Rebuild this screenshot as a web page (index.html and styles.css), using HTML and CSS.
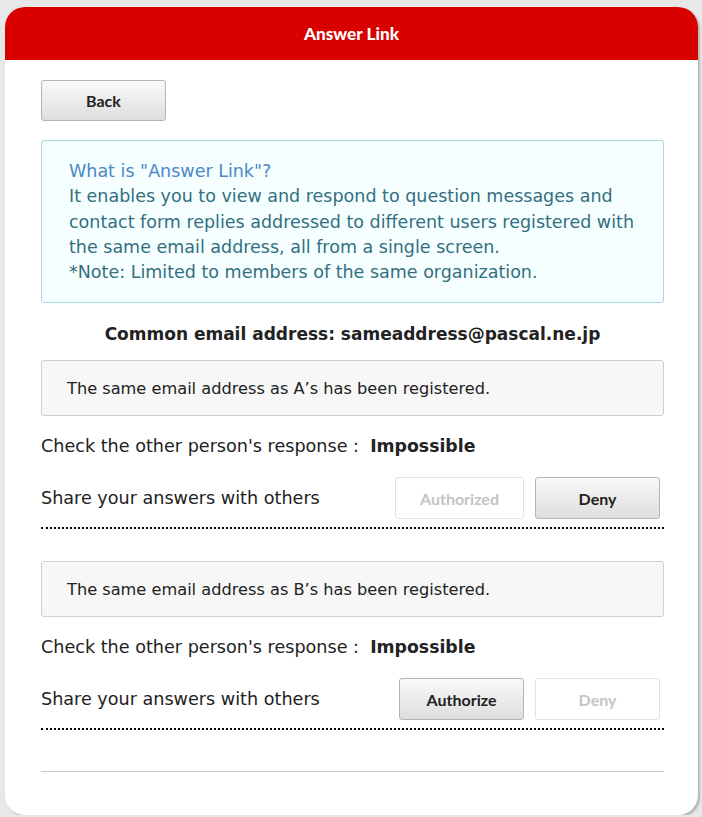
FILE: index.html
```html
<!DOCTYPE html>
<html lang="en">
<head>
<meta charset="utf-8">
<title>Answer Link</title>
<link rel="stylesheet" href="styles.css">
</head>
<body>
<div class="card">
  <header class="card-header">Answer Link</header>
  <main class="card-body">
    <button class="btn btn-back">Back</button>
    <div class="info">
      <div class="info-title">What is "Answer Link"?</div>
      <div class="info-text">It enables you to view and respond to question messages and contact form replies addressed to different users registered with the same email address, all from a single screen.<br>*Note: Limited to members of the same organization.</div>
    </div>
    <div class="common">Common email address: sameaddress@pascal.ne.jp</div>

    <section class="link">
      <div class="notice">The same email address as A’s has been registered.</div>
      <div class="check">Check the other person's response :&nbsp; <b>Impossible</b></div>
      <div class="share">
        <span>Share your answers with others</span>
        <div class="actions">
          <button class="btn btn-off btn-wide">Authorized</button>
          <button class="btn">Deny</button>
        </div>
      </div>
    </section>

    <section class="link">
      <div class="notice">The same email address as B’s has been registered.</div>
      <div class="check">Check the other person's response :&nbsp; <b>Impossible</b></div>
      <div class="share">
        <span>Share your answers with others</span>
        <div class="actions">
          <button class="btn">Authorize</button>
          <button class="btn btn-off">Deny</button>
        </div>
      </div>
    </section>

    <hr class="rule">
  </main>
</div>
</body>
</html>
```

FILE: styles.css
```css
html, body {
  margin: 0;
  padding: 0;
}
body {
  background: #e8e8e8;
  font-family: "DejaVu Sans", Verdana, sans-serif;
  color: #222;
}
.card {
  margin: 7px 4px 0 5px;
  width: 693px;
  height: 808px;
  box-sizing: border-box;
  background: #fff;
  border-radius: 20px;
  box-shadow: 2px 2px 2px rgba(0, 0, 0, 0.22);
  overflow: hidden;
}
.card-header {
  height: 53px;
  line-height: 53px;
  background: #d90000;
  color: #fff;
  text-align: center;
  font-family: Lato, "Liberation Sans", sans-serif;
  font-weight: 900;
  font-size: 17.2px;
}
.card-body {
  padding: 20px 34px 0 36px;
}
.btn {
  width: 125px;
  height: 42px;
  box-sizing: border-box;
  border: 1px solid #b4b4b4;
  border-radius: 3px;
  background: linear-gradient(#f9f9f9, #dedede);
  font-family: Lato, "Liberation Sans", sans-serif;
  font-weight: 700;
  font-size: 16px;
  color: #222;
  padding: 0;
}
.btn-back {
  height: 41px;
  display: block;
}
.btn-off {
  background: #fff;
  border-color: #e2e2e2;
  color: #c4c4c4;
}
.btn-wide {
  width: 129px;
}
.info {
  margin-top: 19px;
  border: 1px solid #a9d6df;
  border-radius: 3px;
  background: #f5ffff;
  padding: 18px 20px 17px 27px;
  font-size: 17.5px;
  line-height: 25.3px;
  color: #336f7f;
}
.info-title {
  color: #4c87c6;
}
.common {
  margin-top: 19px;
  text-align: center;
  font-weight: 700;
  font-size: 17px;
  line-height: 25px;
}
.link {
  margin-top: 13px;
  padding-bottom: 8px;
  border-bottom: 2px dotted #000;
}
.link + .link {
  margin-top: 32px;
}
.notice {
  height: 56px;
  box-sizing: border-box;
  display: flex;
  align-items: center;
  padding: 0 25px;
  background: #f7f7f7;
  border: 1px solid #cfcfcf;
  border-radius: 3px;
  font-size: 16.2px;
}
.check {
  margin-top: 17px;
  line-height: 26px;
  font-size: 17.6px;
}
.check b {
  font-size: 17.3px;
}
.share {
  margin-top: 18px;
  display: flex;
  align-items: center;
  justify-content: space-between;
  padding-right: 4px;
  font-size: 17.6px;
}
.actions {
  display: flex;
  gap: 11px;
}
.rule {
  margin: 41px 0 0;
  border: 0;
  border-top: 1px solid #c8c8c8;
}
```
